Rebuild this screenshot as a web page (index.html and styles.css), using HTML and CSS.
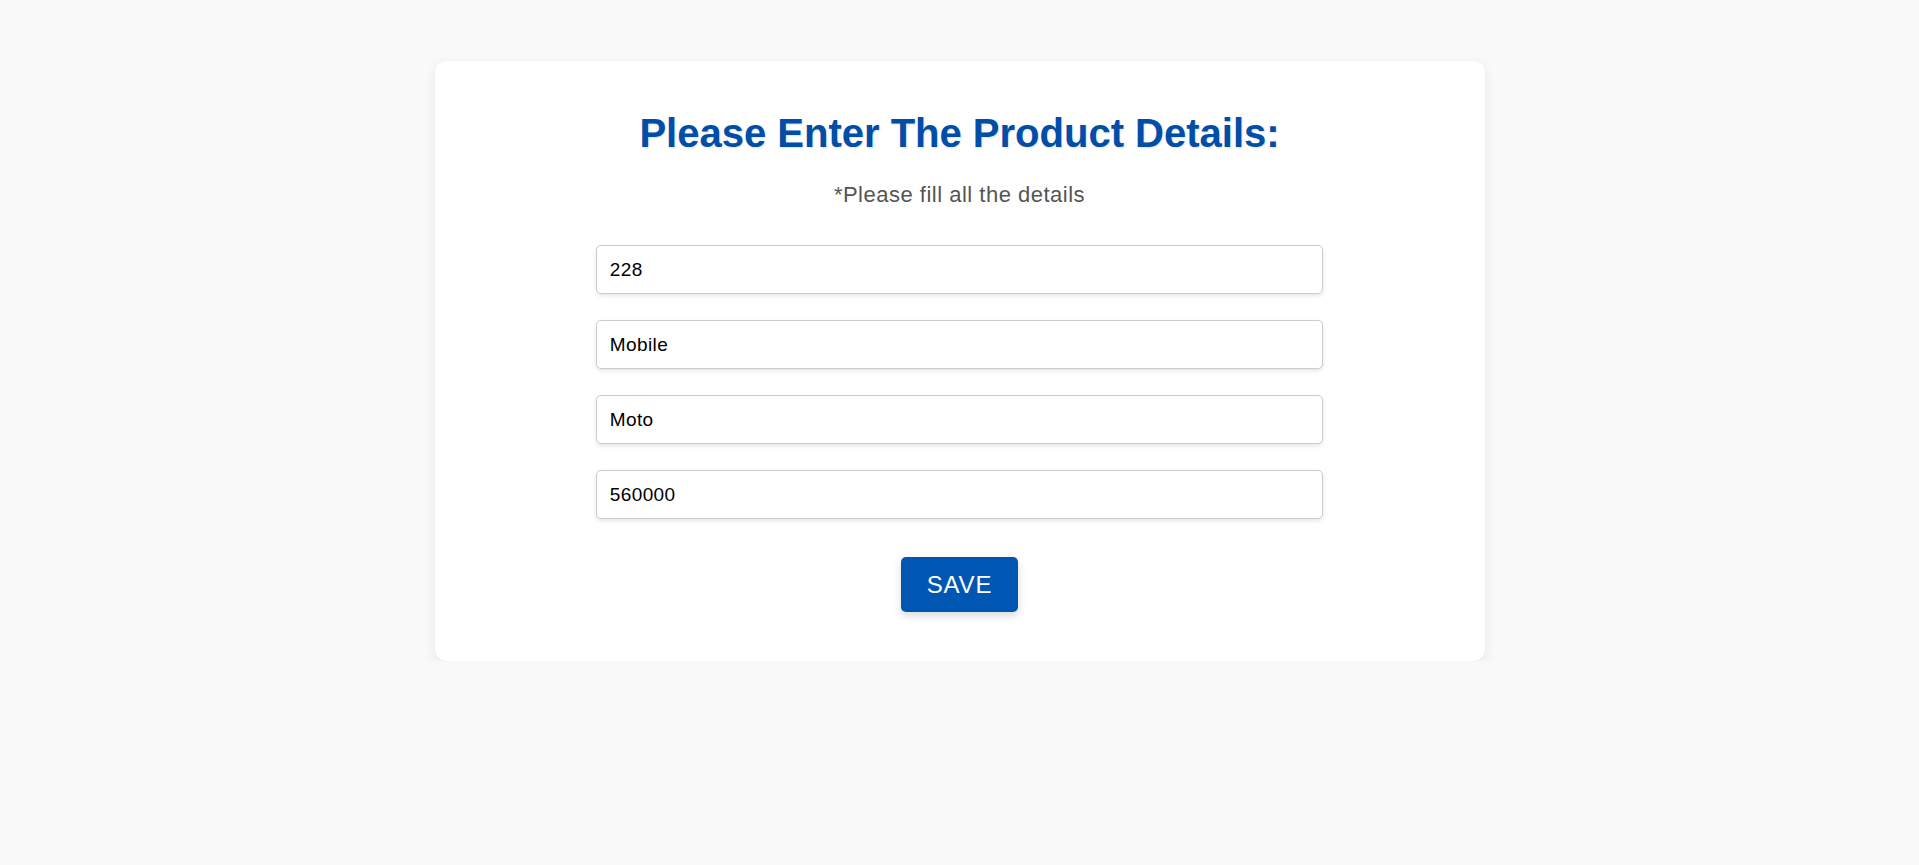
FILE: index.html
```html
<!DOCTYPE html>
<html lang="en">
<head>
<meta charset="utf-8">
<title>Product Details</title>
<link rel="stylesheet" href="styles.css">
</head>
<body>
<main class="card">
  <h1 class="title">Please Enter The Product Details:</h1>
  <p class="note">*Please fill all the details</p>
  <form class="form">
    <input class="field" type="text" value="228">
    <input class="field" type="text" value="Mobile">
    <input class="field" type="text" value="Moto">
    <input class="field" type="text" value="560000">
    <button class="save" type="button">SAVE</button>
  </form>
</main>
</body>
</html>
```

FILE: styles.css
```css
html, body {
  margin: 0;
  padding: 0;
}
body {
  background: #f9f9f9;
  font-family: "Liberation Sans", Arial, sans-serif;
  padding-top: 61px;
}
.card {
  box-sizing: border-box;
  width: 1050px;
  height: 600px;
  margin: 0 auto;
  background: #ffffff;
  border-radius: 12px;
  box-shadow: 0 4px 12px rgba(0, 0, 0, 0.08);
  padding: 49px 40px 40px;
  display: flex;
  flex-direction: column;
  align-items: center;
}
.title {
  margin: 0;
  font-size: 40px;
  line-height: 46px;
  font-weight: bold;
  color: #004ea8;
  text-shadow: 1px 1px 2px rgba(0, 0, 0, 0.12);
  text-align: center;
}
.note {
  margin: 26px 0 0;
  font-size: 22px;
  line-height: 25px;
  letter-spacing: 0.5px;
  color: #555555;
  text-align: center;
}
.form {
  width: 75%;
  margin-top: 38px;
  display: flex;
  flex-direction: column;
  align-items: center;
}
.field {
  box-sizing: border-box;
  width: 100%;
  height: 49px;
  margin: 0 0 26px;
  padding: 0 12px 0 13px;
  border: 1px solid #cccccc;
  border-radius: 5px;
  box-shadow: 0 2px 4px rgba(0, 0, 0, 0.1);
  font-family: "Liberation Sans", Arial, sans-serif;
  font-size: 19px;
  letter-spacing: 0.4px;
  color: #000000;
  background: #ffffff;
  outline: none;
}
.save {
  margin-top: 12px;
  width: 117px;
  height: 55px;
  border: none;
  border-radius: 5px;
  background: #0056b3;
  color: #ffffff;
  font-family: "Liberation Sans", Arial, sans-serif;
  font-size: 24px;
  letter-spacing: 0.8px;
  box-shadow: 0 4px 8px rgba(0, 0, 0, 0.15);
  cursor: pointer;
}
```
